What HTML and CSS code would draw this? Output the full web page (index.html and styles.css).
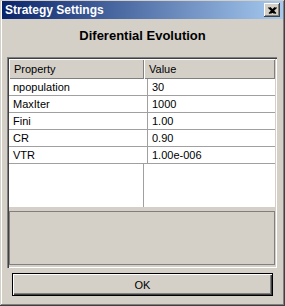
FILE: index.html
```html
<!DOCTYPE html>
<html>
	<head>
		<meta charset="UTF-8">
		<title>Strategy Settings</title>
		<link rel="stylesheet" href="styles.css">
	</head>
	<body>
		<div class="window">
			<div class="titlebar">
				<span class="title">Strategy Settings</span>
				<span class="close">
					<svg width="9" height="7" viewBox="0 0 9 7">
						<path d="M0.5 0.5 L6.5 6.5 M2 0.5 L8 6.5 M8.5 0.5 L2.5 6.5 M7 0.5 L1 6.5" stroke="#000" stroke-width="1.3" fill="none"/>
					</svg>
				</span>
			</div>
			<h1 class="heading">Diferential Evolution</h1>
			<div class="panel">
				<div class="list">
					<div class="list-head">
						<div class="head-cell col-prop">Property</div>
						<div class="head-cell col-val">Value</div>
					</div>
					<div class="row"><div class="cell col-prop">npopulation</div><div class="cell col-val">30</div></div>
					<div class="row"><div class="cell col-prop">MaxIter</div><div class="cell col-val">1000</div></div>
					<div class="row"><div class="cell col-prop">Fini</div><div class="cell col-val">1.00</div></div>
					<div class="row"><div class="cell col-prop">CR</div><div class="cell col-val">0.90</div></div>
					<div class="row"><div class="cell col-prop">VTR</div><div class="cell col-val">1.00e-006</div></div>
					<div class="filler"><div class="col-prop"></div><div class="col-val"></div></div>
				</div>
				<div class="desc"></div>
			</div>
			<div class="actions">
				<a class="ok" href="javascript:;">OK</a>
			</div>
		</div>
	</body>
</html>
```

FILE: styles.css
```css
html,body,div,h1,span,a {
	margin: 0;
	padding: 0;
}
body {
	font-family: "Liberation Sans", Arial, sans-serif;
	font-size: 11px;
	color: #000;
	background-color: #d4d0c8;
}
a {
	text-decoration: none;
	color: #000;
}

.window {
	width: 285px;
	height: 306px;
	box-sizing: border-box;
	padding: 1px 2px 2px 2px;
	background-color: #d4d0c8;
	box-shadow: inset -1px -1px #404040, inset 1px 1px #d4d0c8,
		inset -2px -2px #808080, inset 2px 2px #fff;
}
.titlebar {
	height: 18px;
	display: flex;
	align-items: center;
	justify-content: space-between;
	padding: 0 3px 0 3px;
	background: linear-gradient(to right, #0a246a, #a6caf0);
}
.titlebar .title {
	color: #fff;
	font-weight: bold;
	font-size: 12px;
	line-height: 18px;
}
.titlebar .close {
	width: 16px;
	height: 14px;
	box-sizing: border-box;
	display: flex;
	align-items: center;
	justify-content: center;
	background-color: #d4d0c8;
	box-shadow: inset -1px -1px #404040, inset 1px 1px #fff,
		inset -2px -2px #808080;
}
.heading {
	margin: 9px 0 13px 0;
	font-size: 13px;
	line-height: 16px;
	font-weight: bold;
	text-align: center;
}

.panel {
	height: 211px;
	margin: 0 6px 0 5px;
	box-sizing: border-box;
	padding: 2px 2px 1px 2px;
	box-shadow: inset 1px 1px #808080, inset 2px 2px #404040,
		inset -1px -1px #fff, inset -2px -2px #d4d0c8;
	display: flex;
	flex-direction: column;
}
.list {
	height: 148px;
	background-color: #fff;
	display: flex;
	flex-direction: column;
}
.col-prop {
	width: 134px;
	flex: none;
}
.col-val {
	flex: 1;
}
.list-head {
	height: 20px;
	display: flex;
}
.head-cell {
	height: 20px;
	line-height: 20px;
	box-sizing: border-box;
	padding-left: 5px;
	background-color: #d4d0c8;
	box-shadow: inset 1px 1px #fff, inset -1px -1px #808080;
}
.list-head .col-prop {
	width: 135px;
}
.row {
	height: 17px;
	box-sizing: border-box;
	display: flex;
	border-bottom: 1px solid #a0a0a0;
}
.cell {
	line-height: 16px;
	padding-left: 4px;
	white-space: nowrap;
}
.row .col-prop,
.filler .col-prop {
	border-right: 1px solid #a0a0a0;
}
.filler {
	flex: 1;
	display: flex;
}
.desc {
	margin-top: 4px;
	height: 54px;
	box-sizing: border-box;
	border: 1px solid #808080;
	background-color: #d4d0c8;
}

.actions {
	padding: 5px 10px 0 10px;
}
.ok {
	display: block;
	height: 23px;
	line-height: 23px;
	text-align: center;
	box-sizing: border-box;
	border: 1px solid #000;
	background-color: #d4d0c8;
	box-shadow: inset 1px 1px #fff, inset -1px -1px #404040,
		inset -2px -2px #808080;
}
```
